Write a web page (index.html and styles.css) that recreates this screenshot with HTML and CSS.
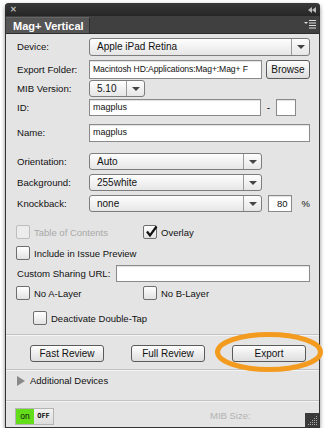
FILE: index.html
```html
<!DOCTYPE html>
<html lang="en">
<head>
    <meta charset="UTF-8">
    <meta name="viewport" content="width=device-width, initial-scale=1.0">
    <title>Mag+ Vertical</title>
    <link rel="stylesheet" href="styles.css">
</head>
<body>
  <div class="panel">
    <div class="titlebar">
      <span class="close">&#x2715;</span>
      <svg class="collapse" width="8" height="6" viewBox="0 0 8 6"><path d="M4 0 L0 3 L4 6Z M8 0 L4 3 L8 6Z" fill="#bbb"/></svg>
    </div>
    <div class="tabbar">
      <div class="tab">Mag+ Vertical</div>
      <svg class="menu" width="12" height="9" viewBox="0 0 12 9">
        <path d="M0 2 L4 2 L2 4Z" fill="#ddd"/>
        <rect x="5" y="0" width="7" height="1" fill="#ddd"/>
        <rect x="5" y="2.5" width="7" height="1" fill="#ddd"/>
        <rect x="5" y="5" width="7" height="1" fill="#ddd"/>
        <rect x="5" y="7.5" width="7" height="1" fill="#ddd"/>
      </svg>
    </div>

    <div class="form">
      <div class="row r-device">
        <label class="label">Device:</label>
        <div class="select grow"><span>Apple iPad Retina</span><i class="arrow"></i></div>
      </div>
      <div class="row r-export">
        <label class="label">Export Folder:</label>
        <div class="input w-mid">Macintosh HD:Applications:Mag+:Mag+ F</div>
        <button class="btn browse">Browse</button>
      </div>
      <div class="row r-mib">
        <label class="label">MIB Version:</label>
        <div class="select w-mib"><span>5.10</span><i class="arrow"></i></div>
      </div>
      <div class="row r-id">
        <label class="label">ID:</label>
        <div class="input w-id">magplus</div>
        <span class="dash">-</span>
        <div class="input w-small"></div>
      </div>
      <div class="row r-name">
        <label class="label">Name:</label>
        <div class="input grow">magplus</div>
      </div>
      <div class="row r-orient">
        <label class="label">Orientation:</label>
        <div class="select w-mid"><span>Auto</span><i class="arrow"></i></div>
      </div>
      <div class="row r-bg">
        <label class="label">Background:</label>
        <div class="select w-mid"><span>255white</span><i class="arrow"></i></div>
      </div>
      <div class="row r-knock">
        <label class="label">Knockback:</label>
        <div class="select w-mid"><span>none</span><i class="arrow"></i></div>
        <div class="input num">80</div>
        <span class="pct">%</span>
      </div>
      <div class="row r-toc">
        <div class="check col-a disabled"><i class="box"></i>Table of Contents</div>
        <div class="check"><i class="box checked">
          <svg width="14" height="14" viewBox="0 0 14 14"><path d="M3 6.5 L6 10.5 L12.5 1.5" fill="none" stroke="#111" stroke-width="2.2"/></svg>
        </i>Overlay</div>
      </div>
      <div class="row r-include">
        <div class="check"><i class="box"></i>Include in Issue Preview</div>
      </div>
      <div class="row r-url">
        <label class="label wide">Custom Sharing URL:</label>
        <div class="input grow"></div>
      </div>
      <div class="row r-layer">
        <div class="check col-a"><i class="box"></i>No A-Layer</div>
        <div class="check"><i class="box"></i>No B-Layer</div>
      </div>
      <div class="row r-tap">
        <div class="check"><i class="box"></i>Deactivate Double-Tap</div>
      </div>
    </div>

    <div class="actions">
      <button class="btn action">Fast Review</button>
      <button class="btn action">Full Review</button>
      <button class="btn action">Export</button>
    </div>

    <div class="extra">
      <i class="tri"></i>Additional Devices
    </div>

    <div class="footer">
      <div class="toggle"><span class="on">on</span><span class="off">OFF</span></div>
      <span class="mibsize">MIB Size:</span>
      <svg class="grip" width="14" height="14" viewBox="0 0 14 14">
        <rect width="14" height="14" fill="#3b3b3b"/>
        <g fill="#aaa">
          <rect x="11" y="3" width="1" height="1"/>
          <rect x="9" y="5" width="1" height="1"/><rect x="11" y="5" width="1" height="1"/>
          <rect x="7" y="7" width="1" height="1"/><rect x="9" y="7" width="1" height="1"/><rect x="11" y="7" width="1" height="1"/>
          <rect x="5" y="9" width="1" height="1"/><rect x="7" y="9" width="1" height="1"/><rect x="9" y="9" width="1" height="1"/><rect x="11" y="9" width="1" height="1"/>
          <rect x="3" y="11" width="1" height="1"/><rect x="5" y="11" width="1" height="1"/><rect x="7" y="11" width="1" height="1"/><rect x="9" y="11" width="1" height="1"/><rect x="11" y="11" width="1" height="1"/>
        </g>
      </svg>
    </div>

    <!-- orange callout around the export button -->
    <svg class="highlight" width="116" height="46" viewBox="0 0 116 46">
      <ellipse cx="57" cy="21" rx="51.5" ry="17.5" fill="none" stroke="#f39b1f" stroke-width="5"/>
    </svg>
  </div>
</body>
</html>
```

FILE: styles.css
```css
body {
  margin: 0;
  background: #fff;
  font-family: "Liberation Sans", Arial, sans-serif;
  color: #111;
}

.panel {
  position: relative;
  margin: 3px 0 0 5px;
  width: 313px;
  height: 424px;
  border: 1px solid #333;
  border-top: none;
  border-radius: 4px 4px 0 0;
  background: #e4e4e4;
  box-shadow: 0 2px 4px rgba(0, 0, 0, 0.45);
  display: flex;
  flex-direction: column;
}

/* window chrome */
.titlebar {
  height: 13px;
  background: linear-gradient(#3a3a3a, #262626);
  border-radius: 4px 4px 0 0;
  display: flex;
  align-items: center;
  justify-content: space-between;
  padding: 0 4px 0 5px;
  margin: 0 -1px;
}

.close {
  font-size: 8px;
  color: #bbb;
  font-weight: bold;
}

.tabbar {
  height: 17px;
  background: #404040;
  display: flex;
  align-items: flex-end;
  justify-content: space-between;
  border-bottom: 1px solid #2c2c2c;
}

.tab {
  height: 16px;
  width: 84px;
  background: #555;
  border-right: 1px solid #2e2e2e;
  border-top: 1px solid #666;
  color: #fff;
  font-size: 11px;
  font-weight: bold;
  line-height: 16px;
  padding-left: 7px;
  box-sizing: border-box;
}

.menu {
  margin: 0 3px 4px 0;
}

/* form */
.form {
  display: flex;
  flex-direction: column;
  padding: 4px 9px 0 11px;
  height: 296px;
  border-bottom: 1px solid #c2c2c2;
  box-shadow: 0 1px 0 #f4f4f4;
}

.row {
  display: flex;
  align-items: center;
  height: 17px;
  font-size: 9.6px;
}

.r-export { margin-top: 5px; height: 19px; }
.r-mib { margin-top: 1px; }
.r-id { margin-top: 2px; }
.r-name { margin-top: 8px; }
.r-orient { margin-top: 12px; }
.r-bg { margin-top: 4px; }
.r-knock { margin-top: 4px; }
.r-toc { margin-top: 12px; height: 16px; }
.r-include { margin-top: 5px; height: 16px; }
.r-url { margin-top: 4px; }
.r-layer { margin-top: 3px; height: 16px; }
.r-tap { margin-top: 9px; height: 16px; padding-left: 17px; }

.label {
  width: 72px;
  flex: none;
}

.label.wide {
  width: 99px;
}

.grow { flex: 1; }
.w-mid { width: 173px; flex: none; }
.w-mib { width: 56px; }
.w-id { width: 172px; }
.w-small { width: 20px; }

.select {
  height: 17px;
  box-sizing: border-box;
  border: 1px solid #7d7d7d;
  border-radius: 3px;
  background: linear-gradient(#fefefe, #e6e6e6);
  display: flex;
  align-items: center;
  font-size: 10px;
}

.r-device .select { height: 18px; }

.select span {
  flex: 1;
  padding-left: 7px;
  white-space: nowrap;
  overflow: hidden;
}

.arrow {
  width: 17px;
  height: 100%;
  border-left: 1px solid #9a9a9a;
  display: flex;
  align-items: center;
  justify-content: center;
}

.arrow::after {
  content: "";
  border-left: 4px solid transparent;
  border-right: 4px solid transparent;
  border-top: 4px solid #444;
  margin-top: 1px;
}

.input {
  height: 17px;
  box-sizing: border-box;
  border: 1px solid #8a8a8a;
  background: #fff;
  box-shadow: inset 0 1px 1px rgba(0, 0, 0, 0.12);
  font-size: 9px;
  line-height: 15px;
  padding-left: 3px;
  white-space: nowrap;
  overflow: hidden;
}

.r-export .input {
  height: 19px;
  line-height: 17px;
  font-size: 8.6px;
  letter-spacing: -0.1px;
}

.r-name .input { height: 18px; }

.dash {
  width: 15px;
  text-align: center;
  font-size: 10px;
}

.num {
  width: 25px;
  margin-left: 6px;
  text-align: right;
  padding-right: 3px;
  font-size: 9.5px;
}

.pct {
  margin-left: 10px;
  font-size: 9.5px;
}

.btn {
  font-family: "Liberation Sans", Arial, sans-serif;
  font-size: 10px;
  color: #111;
  background: linear-gradient(#fdfdfd, #dedede);
  border: 1px solid #5a5a5a;
  border-radius: 3px;
  padding: 0;
  height: 19px;
  cursor: pointer;
}

.browse {
  width: 44px;
  margin-left: 4px;
  flex: none;
}

/* checkboxes */
.check {
  display: flex;
  align-items: center;
  font-size: 9.5px;
  margin-left: -1px;
}

.check.col-a {
  width: 128px;
}

.box {
  width: 14px;
  height: 14px;
  box-sizing: border-box;
  border: 1px solid #6e6e6e;
  border-radius: 2px;
  background: linear-gradient(#fff, #e2e2e2);
  margin-right: 4px;
  position: relative;
}

.box svg {
  position: absolute;
  left: 0;
  top: -1px;
}

.check.disabled {
  color: #a8a8a8;
}

.check.disabled .box {
  border-color: #bdbdbd;
  background: #ececec;
}

/* action buttons */
.actions {
  display: flex;
  gap: 27px;
  padding: 10px 0 0 24px;
  height: 24px;
  border-bottom: 1px solid #c2c2c2;
  box-shadow: 0 1px 0 #f4f4f4;
}

.action {
  width: 74px;
  height: 17px;
}

.extra {
  display: flex;
  align-items: flex-start;
  height: 25px;
  padding: 5px 0 0 11px;
  font-size: 9.5px;
  border-bottom: 1px solid #c2c2c2;
  box-shadow: 0 1px 0 #f4f4f4;
}

.tri {
  border-top: 5px solid transparent;
  border-bottom: 5px solid transparent;
  border-left: 8px solid #8a8a8a;
  margin: 1px 5px 0 0;
}

/* footer */
.footer {
  flex: 1;
  display: flex;
  align-items: flex-start;
  padding: 7px 0 0 9px;
  position: relative;
}

.toggle {
  display: flex;
  border: 1px solid #b4b4b4;
  height: 15px;
  font-size: 8px;
}

.toggle .on {
  background: #63dd19;
  width: 18px;
  text-align: center;
  line-height: 15px;
  font-size: 8.5px;
}

.toggle .off {
  background: linear-gradient(#f2f2f2, #dcdcdc);
  width: 19px;
  text-align: center;
  line-height: 15px;
  font-weight: bold;
  font-family: "DejaVu Sans Mono", monospace;
  font-size: 7px;
}

.mibsize {
  margin: 2px 0 0 156px;
  color: #b2b2b2;
  font-size: 9.5px;
}

.grip {
  position: absolute;
  right: 0;
  bottom: 0;
}

.highlight {
  position: absolute;
  left: 206px;
  top: 328px;
}
```
